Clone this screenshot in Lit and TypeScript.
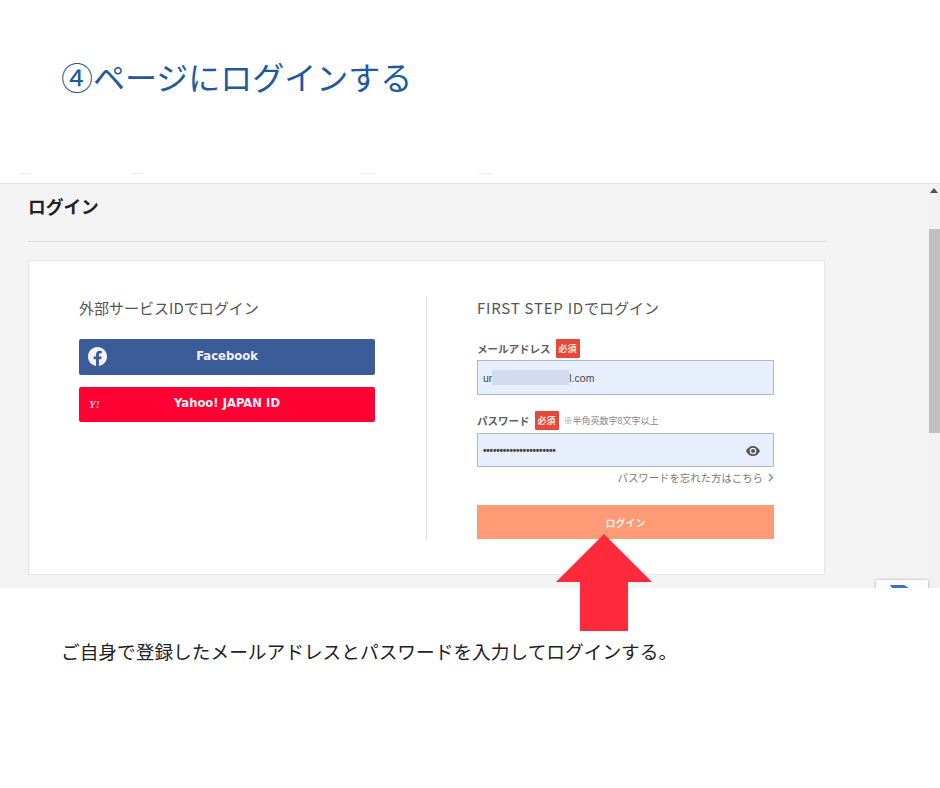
import { LitElement, html, css } from "lit";
import { customElement } from "lit/decorators.js";

@customElement("app-root")
export class AppRoot extends LitElement {
  static styles = css`
    :host {
      display: block;
      position: relative;
      width: 940px;
      height: 788px;
      background: #fff;
      overflow: hidden;
      font-family: "Noto Sans CJK JP", "Liberation Sans", sans-serif;
    }
    .title {
      margin: 0;
      padding: 53px 0 0 61px;
      height: 172px;
      box-sizing: border-box;
      font-size: 32px;
      line-height: 46px;
      font-weight: 400;
      color: #1f5a9c;
      white-space: nowrap;
    }
    .strip {
      height: 11px;
      display: flex;
      align-items: flex-start;
      padding-top: 1px;
      box-sizing: border-box;
    }
    .strip i {
      display: block;
      width: 12px;
      height: 1px;
      background: #ececec;
      margin-left: 20px;
    }
    .strip i:nth-child(2) { margin-left: 99px; }
    .strip i:nth-child(3) { margin-left: 219px; }
    .strip i:nth-child(4) { margin-left: 105px; }
    .shot {
      position: relative;
      height: 405px;
      display: flex;
      background: #f4f4f4;
      border-top: 1px solid #e2e2e2;
      box-sizing: border-box;
      overflow: hidden;
    }
    .content {
      width: 798px;
      margin-left: 28px;
    }
    .content h2 {
      margin: 0;
      padding-top: 10px;
      height: 58px;
      box-sizing: border-box;
      border-bottom: 1px solid #dcdcdc;
      font-size: 17.7px;
      line-height: 24px;
      font-weight: 700;
      color: #222;
    }
    .card {
      margin-top: 18px;
      width: 797px;
      height: 315px;
      box-sizing: border-box;
      background: #fff;
      border: 1px solid #e6e6e6;
      padding: 35px 50px 0;
      display: flex;
    }
    .left {
      width: 348px;
      height: 243px;
      box-sizing: border-box;
      border-right: 1px solid #e2e2e2;
    }
    .right {
      margin-left: 50px;
      width: 297px;
    }
    h3 {
      margin: 0;
      font-size: 15px;
      line-height: 24px;
      font-weight: 400;
      color: #555;
      white-space: nowrap;
    }
    h3 .latin { letter-spacing: 0.77px; }
    .sns {
      width: 296px;
      height: 35px;
      margin-top: 19px;
      position: relative;
      display: flex;
      align-items: center;
      justify-content: center;
      border-radius: 2px;
      color: #f1f1f6;
      font-family: "DejaVu Sans", sans-serif;
      font-size: 11.6px;
      font-weight: 700;
      box-sizing: border-box;
    }
    .sns.fb { background: #3b5b99; height: 36px; margin-top: 19px; padding-bottom: 2px; }
    .sns.yh { background: #ff0033; margin-top: 12px; padding-bottom: 3px; }
    .sns svg { position: absolute; left: 9px; top: 8px; }
    .sns .y {
      position: absolute;
      left: 10px;
      top: 10px;
      font-family: "Liberation Serif", serif;
      font-size: 11px;
      font-weight: 700;
      font-style: italic;
      line-height: 14px;
      color: #f7c2cc;
    }
    .label {
      display: flex;
      align-items: center;
      height: 20px;
      color: #606060;
      font-size: 10.5px;
      font-weight: 700;
      white-space: nowrap;
    }
    .first { margin-top: 18px; }
    .badge {
      width: 24px;
      height: 19px;
      background: #e8483a;
      color: #ffe4dc;
      border-radius: 1px;
      font-size: 9px;
      font-weight: 700;
      display: flex;
      align-items: center;
      justify-content: center;
      margin-left: 5px;
    }
    .hint {
      font-size: 9px;
      font-weight: 400;
      color: #888;
      margin-left: 5px;
    }
    .input {
      position: relative;
      width: 297px;
      height: 35px;
      margin-top: 2px;
      box-sizing: border-box;
      background: #e8effc;
      border: 1px solid #b4bac4;
      display: flex;
      align-items: center;
      padding-left: 5px;
      font-family: "Liberation Sans", sans-serif;
      font-size: 10.5px;
      color: #444;
    }
    .input.pw { margin-top: 3px; height: 34px; }
    .mask {
      display: inline-block;
      width: 77px;
      height: 15px;
      background: #d3dcee;
    }
    .dots {
      font-size: 10px;
      letter-spacing: -0.2px;
      font-weight: 700;
      color: #444;
    }
    .input svg { position: absolute; right: 13px; top: 12px; }
    .second { margin-top: 15px; }
    .forgot {
      display: flex;
      justify-content: flex-end;
      align-items: center;
      gap: 5px;
      height: 20px;
      font-size: 10.4px;
      color: #777;
      white-space: nowrap;
    }
    .forgot svg { display: block; }
    .submit {
      margin-top: 18px;
      width: 297px;
      height: 34px;
      background: #ff9a76;
      color: #fdf1ea;
      font-size: 10px;
      font-weight: 700;
      display: flex;
      align-items: center;
      justify-content: center;
    }
    .scroll {
      margin-left: auto;
      width: 12px;
      background: #f1f1f1;
      position: relative;
      display: flex;
      flex-direction: column;
      align-items: stretch;
    }
    .scroll svg { display: block; margin: 4px auto 0; }
    .thumb {
      margin-top: 36px;
      margin-left: 1px;
      height: 204px;
      background: #c0c0c0;
    }
    .recaptcha {
      position: absolute;
      left: 876px;
      top: 396px;
      width: 52px;
      height: 40px;
      background: #fbfbfb;
      box-shadow: 0 0 3px rgba(0, 0, 0, 0.3);
      overflow: hidden;
    }
    .recaptcha svg { display: block; margin: 5px 0 0 14px; }
    .arrow {
      position: absolute;
      left: 556px;
      top: 534px;
      display: block;
    }
    .note {
      margin: 0;
      padding: 49px 0 0 61px;
      font-size: 18.7px;
      line-height: 27px;
      color: #222;
      white-space: nowrap;
    }
  `;

  render() {
    return html`
      <h1 class="title">④ページにログインする</h1>
      <div class="strip"><i></i><i></i><i></i><i></i></div>
      <div class="shot">
        <div class="content">
          <h2>ログイン</h2>
          <div class="card">
            <div class="left">
              <h3>外部サービスIDでログイン</h3>
              <div class="sns fb">
                <svg width="19" height="19" viewBox="0 0 24 24" fill="#f3f4f8"><path d="M24 12.07C24 5.4 18.63 0 12 0S0 5.4 0 12.07c0 6.03 4.39 11.02 10.13 11.93v-8.44H7.08v-3.49h3.05V9.41c0-3.02 1.79-4.69 4.53-4.69 1.31 0 2.69.24 2.69.24v2.97h-1.52c-1.49 0-1.96.93-1.96 1.89v2.25h3.33l-.53 3.49h-2.8V24C19.61 23.09 24 18.1 24 12.07z"/></svg>
                Facebook
              </div>
              <div class="sns yh"><span class="y">Y!</span>Yahoo! JAPAN ID</div>
            </div>
            <div class="right">
              <h3><span class="latin">FIRST STEP ID</span>でログイン</h3>
              <div class="label first">メールアドレス<span class="badge">必須</span></div>
              <div class="input">ur<span class="mask"></span>l.com</div>
              <div class="label second">パスワード<span class="badge">必須</span><span class="hint">※半角英数字8文字以上</span></div>
              <div class="input pw">
                <span class="dots">••••••••••••••••••••••</span>
                <svg width="14" height="10" viewBox="0 0 14 10"><path fill="#555" fill-rule="evenodd" d="M7 0C4 0 1.4 2 0 5c1.4 3 4 5 7 5s5.600-2 7-5c-1.400-3-4-5-7-5zm0 8.300A3.300 3.300 0 1 1 7 1.700a3.300 3.300 0 0 1 0 6.600z"/><circle cx="7" cy="5" r="2" fill="#555"/></svg>
              </div>
              <div class="forgot">パスワードを忘れた方はこちら
                <svg width="6" height="9" viewBox="0 0 6 9"><path d="M1 1l3.500 3.500L1 8" fill="none" stroke="#5b8fb8" stroke-width="1.300"/></svg>
              </div>
              <div class="submit">ログイン</div>
            </div>
          </div>
        </div>
        <div class="scroll">
          <svg width="8" height="5" viewBox="0 0 8 5"><path d="M4 0l4 5H0z" fill="#505050"/></svg>
          <div class="thumb"></div>
        </div>
        <div class="recaptcha">
          <svg width="26" height="26" viewBox="0 0 26 26"><path d="M0 0h14l10 6v8H10z" fill="#3b6fc0"/></svg>
        </div>
      </div>
      <svg class="arrow" width="96" height="97" viewBox="0 0 96 97"><path d="M48 0L96 48H72V97H24V48H0z" fill="#fe2a3c"/></svg>
      <p class="note">ご自身で登録したメールアドレスとパスワードを入力してログインする。</p>
    `;
  }
}
